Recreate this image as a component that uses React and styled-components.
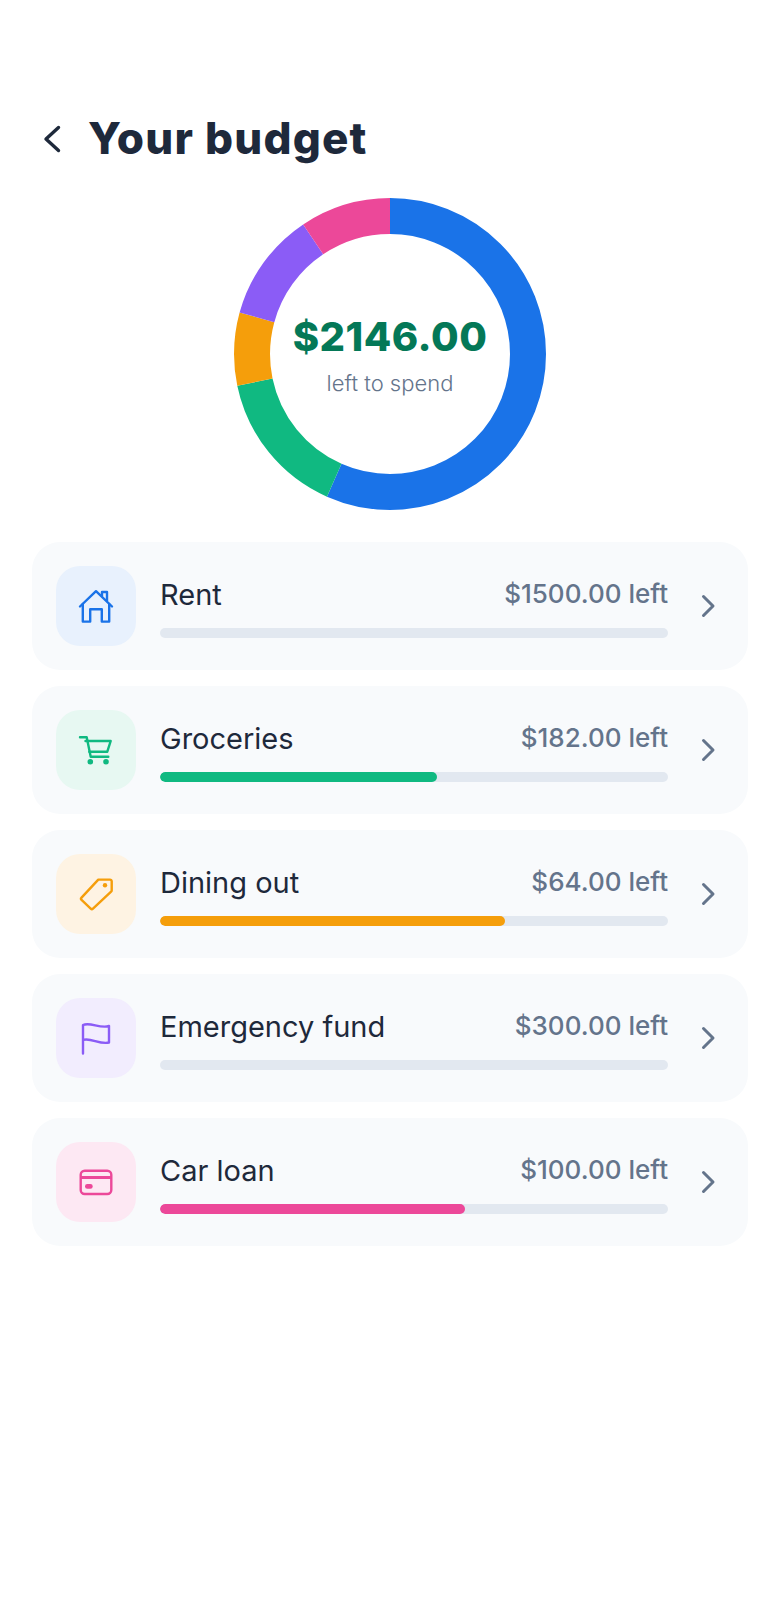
import React from 'react';
import styled, { createGlobalStyle } from 'styled-components';

const GlobalStyle = createGlobalStyle`
  html, body {
    margin: 0;
    padding: 0;
    background: #ffffff;
    font-family: Inter, "Noto Sans", "Liberation Sans", sans-serif;
  }
`;

const Page = styled.div`
  box-sizing: border-box;
  width: 780px;
  min-height: 1600px;
  padding: 111px 32px 0;
`;
const Header = styled.header`
  display: flex;
  align-items: center;
  gap: 16px;
  height: 56px;
`;
const Title = styled.h1`
  margin: -2px 0 0;
  font-size: 44px;
  font-weight: 800;
  letter-spacing: 1.2px;
  color: #1e293b;
`;
const DonutWrap = styled.div`
  display: grid;
  place-items: center;
  width: 312px;
  height: 312px;
  margin: 31px auto 32px;
  svg,
  div {
    grid-area: 1 / 1;
  }
`;
const DonutCenter = styled.div`
  display: flex;
  flex-direction: column;
  align-items: center;
  margin-top: -2px;
`;
const Remaining = styled.div`
  font-size: 40px;
  line-height: 56px;
  font-weight: 800;
  letter-spacing: 0.5px;
  color: #047857;
`;
const RemainingLabel = styled.div`
  margin-top: 3px;
  font-size: 22px;
  line-height: 30px;
  font-weight: 300;
  color: #64748b;
`;
const List = styled.div`
  display: flex;
  flex-direction: column;
  gap: 16px;
`;
const Card = styled.div`
  display: flex;
  align-items: center;
  gap: 24px;
  height: 128px;
  padding: 0 22px 0 24px;
  box-sizing: border-box;
  background: #f8fafc;
  border-radius: 28px;
`;
const IconBox = styled.div`
  flex: none;
  display: flex;
  align-items: center;
  justify-content: center;
  width: 80px;
  height: 80px;
  border-radius: 24px;
  color: ${(p) => p.$color};
  background: ${(p) => p.$tint};
`;
const Body = styled.div`
  flex: 1;
  min-width: 0;
`;
const TopLine = styled.div`
  display: flex;
  justify-content: space-between;
  align-items: center;
  height: 38px;
  margin-bottom: 16px;
`;
const Name = styled.div`
  font-size: 29px;
  font-weight: 420;
  color: #1e293b;
  margin-top: 2px;
`;
const Left = styled.div`
  font-size: 26px;
  font-weight: 550;
  color: #64748b;
`;
const Track = styled.div`
  height: 10px;
  border-radius: 5px;
  background: #e2e8f0;
  overflow: hidden;
`;
const Fill = styled.div`
  height: 100%;
  border-radius: 5px;
  background: ${(p) => p.$color};
`;
const Chevron = styled.svg`
  flex: none;
  margin-left: -2px;
  color: #64748b;
`;

const HomeIcon = () => (
  <svg width="40" height="40" viewBox="0 0 40 40" fill="none" stroke="currentColor" strokeWidth="2.4" strokeLinecap="round" strokeLinejoin="round">
    <path d="M4 20.5 20 5.2l16 15.3" />
    <path d="M6.8 18v17.6h7.4V23.2h11.6v12.4h7.4V18" />
    <path d="M26 10V6h5v9" />
  </svg>
);
const CartIcon = () => (
  <svg width="40" height="40" viewBox="0 0 40 40" fill="none" stroke="currentColor" strokeWidth="2.4" strokeLinecap="round" strokeLinejoin="round">
    <path d="M4 7.3h6.7l4 19.4h17.6" />
    <path d="M9.5 11h25.2l-3.4 10.7H13.3" />
    <circle cx="14.3" cy="31.7" r="1.6" fill="currentColor" />
    <circle cx="30" cy="31.7" r="1.6" fill="currentColor" />
  </svg>
);
const TagIcon = () => (
  <svg width="40" height="40" viewBox="0 0 40 40" fill="none" stroke="currentColor" strokeWidth="2.4" strokeLinecap="round" strokeLinejoin="round">
    <path d="M22.3 5.6H34a1.7 1.7 0 0 1 1.7 1.7v9.2a1.7 1.7 0 0 1-.6 1.2L17 34.6a1.7 1.7 0 0 1-2.3 0L5.3 25.7a1.2 1.2 0 0 1 0-1.8Z" />
    <circle cx="29" cy="11.3" r="2.2" fill="currentColor" stroke="none" />
  </svg>
);
const FlagIcon = () => (
  <svg width="40" height="40" viewBox="0 0 40 40" fill="none" stroke="currentColor" strokeWidth="2.4" strokeLinecap="round" strokeLinejoin="round">
    <path d="M7 35.5V7C14 3.5 24 11 33 8v16.5C24 27 14 19 7 22" />
  </svg>
);
const CardIcon = () => (
  <svg width="40" height="40" viewBox="0 0 40 40" fill="none" stroke="currentColor" strokeWidth="2.4" strokeLinecap="round" strokeLinejoin="round">
    <rect x="4.7" y="8.7" width="30.6" height="23.3" rx="4" />
    <path d="M4.7 15.5h30.6" strokeWidth="3" strokeLinecap="butt" />
    <rect x="9" y="22" width="7.7" height="4.7" rx="2.3" fill="currentColor" stroke="none" />
  </svg>
);

const categories = [
  { name: 'Rent', budget: 1500, left: 1500, color: '#1a73e8', tint: '#e8f1fd', Icon: HomeIcon },
  { name: 'Groceries', budget: 400, left: 182, color: '#10b981', tint: '#e7f8f2', Icon: CartIcon },
  { name: 'Dining out', budget: 200, left: 64, color: '#f59e0b', tint: '#fef3e3', Icon: TagIcon },
  { name: 'Emergency fund', budget: 300, left: 300, color: '#8b5cf6', tint: '#f2edfe', Icon: FlagIcon },
  { name: 'Car loan', budget: 250, left: 100, color: '#ec4899', tint: '#fde8f3', Icon: CardIcon },
];

const Donut = () => {
  const r = 138;
  const circumference = 2 * Math.PI * r;
  const total = categories.reduce((sum, c) => sum + c.budget, 0);
  let used = 0;
  return (
    <svg width="312" height="312" viewBox="0 0 312 312">
      <g transform="rotate(-90 156 156)" fill="none" strokeWidth="36">
        {categories.map((c) => {
          const len = (c.budget / total) * circumference;
          const offset = -used;
          used += len;
          return (
            <circle
              key={c.name}
              cx="156"
              cy="156"
              r={r}
              stroke={c.color}
              strokeDasharray={`${len} ${circumference - len}`}
              strokeDashoffset={offset}
            />
          );
        })}
      </g>
    </svg>
  );
};

const App = () => (
  <Page>
    <GlobalStyle />
    <Header>
      <svg width="40" height="40" viewBox="0 0 40 40" fill="none" stroke="#1e293b" strokeWidth="3.4" strokeLinecap="round" strokeLinejoin="round">
        <path d="M26.5 8.5 14 20l12.5 11.5" />
      </svg>
      <Title>Your budget</Title>
    </Header>
    <DonutWrap>
      <Donut />
      <DonutCenter>
        <Remaining>$2146.00</Remaining>
        <RemainingLabel>left to spend</RemainingLabel>
      </DonutCenter>
    </DonutWrap>
    <List>
      {categories.map(({ name, budget, left, color, tint, Icon }) => (
        <Card key={name}>
          <IconBox $color={color} $tint={tint}>
            <Icon />
          </IconBox>
          <Body>
            <TopLine>
              <Name>{name}</Name>
              <Left>${left.toFixed(2)} left</Left>
            </TopLine>
            <Track>
              <Fill $color={color} style={{ width: `${((budget - left) / budget) * 100}%` }} />
            </Track>
          </Body>
          <Chevron width="36" height="36" viewBox="0 0 36 36" fill="none" stroke="currentColor" strokeWidth="3" strokeLinecap="round" strokeLinejoin="round">
            <path d="M13.5 8.5 23 18l-9.5 9.5" />
          </Chevron>
        </Card>
      ))}
    </List>
  </Page>
);

export default App;
